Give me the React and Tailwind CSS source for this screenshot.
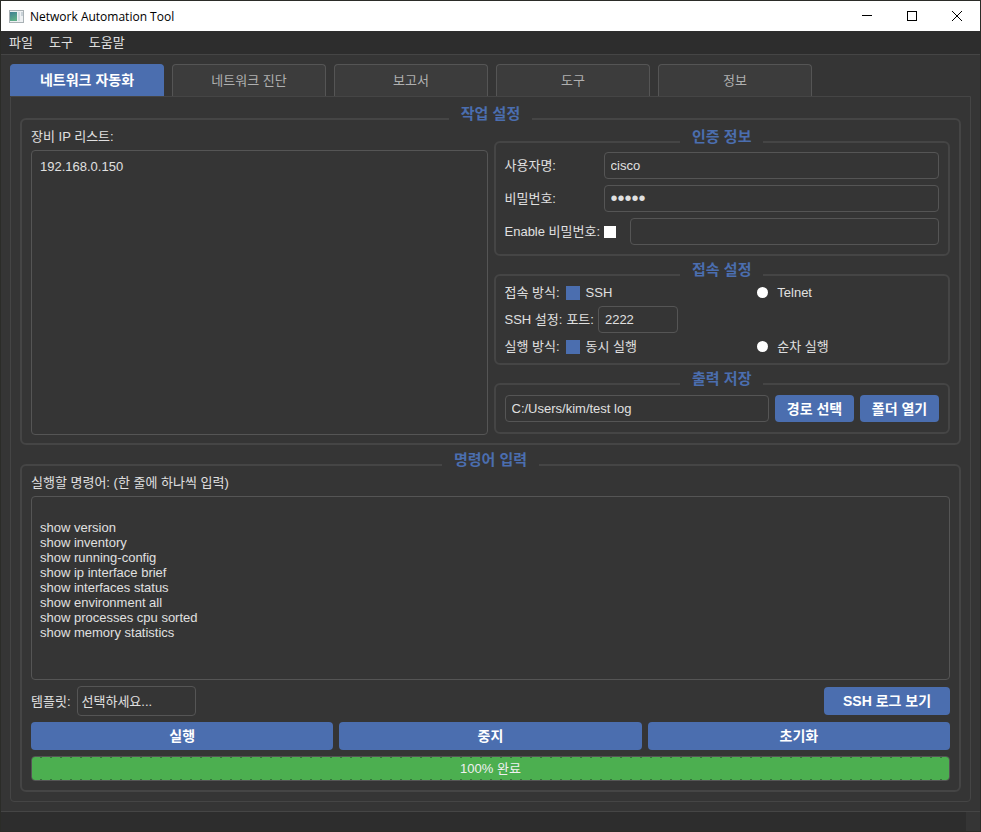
import React, { useState } from 'react';

const TABS = ['네트워크 자동화', '네트워크 진단', '보고서', '도구', '정보'];
const MENUS = ['파일', '도구', '도움말'];

const DEFAULT_COMMANDS = `
show version
show inventory
show running-config
show ip interface brief
show interfaces status
show environment all
show processes cpu sorted
show memory statistics`;

const fieldClass =
  'rounded-[4px] border border-[#555555] bg-[#353535] text-[#e0e0e0] outline-none focus:border-[#4b6eaf]';

function Group({ title, className = '', children }) {
  return (
    <fieldset className={`min-w-0 rounded-[6px] border-2 border-[#454545] px-[9px] ${className}`}>
      <legend className="mx-auto px-3 pb-[10px] text-[15px] leading-[10px] font-bold text-[#4b6eaf]">{title}</legend>
      {children}
    </fieldset>
  );
}

function Button({ className = '', children, ...props }) {
  return (
    <button
      type="button"
      className={`rounded-[4px] bg-[#4b6eaf] text-[14px] leading-5 font-bold text-white hover:bg-[#5a7dbe] ${className}`}
      {...props}
    >
      {children}
    </button>
  );
}

function Radio({ label, ...props }) {
  return (
    <label className="flex items-center gap-[6px]">
      <input
        type="radio"
        className="mr-[3px] size-[11px] appearance-none rounded-full bg-white checked:mr-0 checked:size-[14px] checked:rounded-none checked:bg-[#4b6eaf]"
        {...props}
      />
      {label}
    </label>
  );
}

function TitleBar() {
  return (
    <header className="flex h-[30px] items-center bg-white text-black">
      <svg className="ml-2 h-[13px] w-[15px]" viewBox="0 0 15 13">
        <defs>
          <linearGradient id="appIcon" x1="0" y1="0" x2="0.4" y2="1">
            <stop offset="0" stopColor="#3f7f94" />
            <stop offset="1" stopColor="#5fae88" />
          </linearGradient>
        </defs>
        <rect x="0.5" y="0.5" width="14" height="12" fill="#eef1f3" stroke="#a9b1b5" />
        <rect x="1" y="2" width="7" height="9" fill="url(#appIcon)" />
        <rect x="9" y="2" width="2" height="9" fill="#d5dce2" />
        <rect x="12" y="2" width="2" height="4" fill="#c9d2d8" />
      </svg>
      <h1 className="ml-[6px] flex-1 font-['Open_Sans',sans-serif] text-[12px]">Network Automation Tool</h1>
      <button type="button" aria-label="Minimize" className="flex h-full w-[45px] items-center justify-center">
        <svg width="10" height="10" viewBox="0 0 10 10" shapeRendering="crispEdges">
          <path d="M0 4.5h10" stroke="#000" fill="none" />
        </svg>
      </button>
      <button type="button" aria-label="Maximize" className="flex h-full w-[45px] items-center justify-center">
        <svg width="10" height="10" viewBox="0 0 10 10" shapeRendering="crispEdges">
          <path d="M0.5 0.5h9v9h-9z" stroke="#000" fill="none" />
        </svg>
      </button>
      <button type="button" aria-label="Close" className="flex h-full w-[46px] items-center justify-center">
        <svg width="10" height="10" viewBox="0 0 10 10">
          <path d="M0 0l10 10M10 0L0 10" stroke="#000" fill="none" />
        </svg>
      </button>
    </header>
  );
}

function ProgressBar({ value }) {
  return (
    <div
      role="progressbar"
      aria-valuenow={value}
      className="relative h-[25px] overflow-hidden rounded-[4px] border border-[#555555]"
    >
      <div className="flex h-full flex-col bg-[#4caf50]" style={{ width: `${value}%` }}>
        <div className="h-px bg-[repeating-linear-gradient(90deg,transparent_0_8px,#34753a_8px_10px)]" />
        <div className="flex-1" />
        <div className="h-px bg-[repeating-linear-gradient(90deg,transparent_0_8px,#34753a_8px_10px)]" />
      </div>
      <span className="absolute inset-0 flex items-center justify-center text-[#f0f0f0]">{value}% 완료</span>
    </div>
  );
}

export default function App() {
  const [tab, setTab] = useState(TABS[0]);
  const [ips, setIps] = useState('192.168.0.150');
  const [commands, setCommands] = useState(DEFAULT_COMMANDS);
  const [protocol, setProtocol] = useState('ssh');
  const [runMode, setRunMode] = useState('parallel');
  const [progress, setProgress] = useState(100);

  return (
    <div className="flex min-h-screen flex-col border border-[#2b2c28] bg-[#353535] font-['Liberation_Sans','Noto_Sans_CJK_KR',sans-serif] text-[13px] leading-[15px] text-[#e0e0e0]">
      <TitleBar />

      <nav className="flex h-6 items-center gap-4 border-b border-[#454545] bg-[#2d2d2d] px-2">
        {MENUS.map((menu) => (
          <button key={menu} type="button">{menu}</button>
        ))}
      </nav>

      <main className="flex flex-1 flex-col p-[9px]">
        {/* Tabs */}
        <div role="tablist" className="flex gap-2">
          {TABS.map((name) => (
            <button
              key={name}
              type="button"
              role="tab"
              aria-selected={tab === name}
              onClick={() => setTab(name)}
              className={`h-8 w-[154px] rounded-t-[4px] border border-b-0 ${
                tab === name
                  ? 'border-[#4b6eaf] bg-[#4b6eaf] text-[14px] font-bold text-white'
                  : 'border-[#555555] bg-[#3c3c3c] text-[#b0b0b0]'
              }`}
            >
              {name}
            </button>
          ))}
        </div>

        <div className="flex flex-1 flex-col gap-[10px] rounded-b-[4px] border border-[#454545] px-[9px] pt-3 pb-[9px]">
          {/* Job settings */}
          <Group title="작업 설정" className="pb-2">
            <div className="grid grid-cols-2 gap-[6px]">
              <div className="flex flex-col gap-[6px]">
                <label htmlFor="ips">장비 IP 리스트:</label>
                <textarea
                  id="ips"
                  value={ips}
                  onChange={(e) => setIps(e.target.value)}
                  className={`flex-1 resize-none p-2 ${fieldClass}`}
                />
              </div>

              <div className="flex flex-col gap-[9px] pt-[3px] pb-px">
                <Group title="인증 정보" className="pb-[9px]">
                  <div className="flex flex-col gap-[6px]">
                    <div className="flex items-center gap-[3px]">
                      <label htmlFor="user" className="w-24">사용자명:</label>
                      <input id="user" type="text" defaultValue="cisco" className={`h-[27px] min-w-0 flex-1 px-[6px] ${fieldClass}`} />
                    </div>
                    <div className="flex items-center gap-[3px]">
                      <label htmlFor="password" className="w-24">비밀번호:</label>
                      <input id="password" type="password" defaultValue="cisco" className={`h-[27px] min-w-0 flex-1 px-[6px] text-[20px] ${fieldClass}`} />
                    </div>
                    <div className="flex items-center gap-[3px]">
                      <label htmlFor="useEnable" className="w-24 whitespace-nowrap">Enable 비밀번호:</label>
                      <input id="useEnable" type="checkbox" className="mr-[11px] size-3 appearance-none bg-white checked:bg-[#4b6eaf]" />
                      <input type="password" aria-label="Enable 비밀번호" className={`h-[27px] min-w-0 flex-1 px-[6px] text-[20px] ${fieldClass}`} />
                    </div>
                  </div>
                </Group>

                <Group title="접속 설정" className="pb-[9px]">
                  <div className="flex flex-col gap-[6px]">
                    <div className="flex items-center gap-[6px]">
                      <span>접속 방식:</span>
                      <div className="grid flex-1 grid-cols-2 gap-[10px]">
                        <Radio label="SSH" name="protocol" checked={protocol === 'ssh'} onChange={() => setProtocol('ssh')} />
                        <Radio label="Telnet" name="protocol" checked={protocol === 'telnet'} onChange={() => setProtocol('telnet')} />
                      </div>
                    </div>
                    <div className="flex items-center gap-1">
                      <span>SSH 설정:</span>
                      <label htmlFor="port">포트:</label>
                      <input id="port" type="text" defaultValue="2222" className={`h-[27px] w-20 px-[6px] ${fieldClass}`} />
                    </div>
                    <div className="flex items-center gap-[6px]">
                      <span>실행 방식:</span>
                      <div className="grid flex-1 grid-cols-2 gap-[10px]">
                        <Radio label="동시 실행" name="runMode" checked={runMode === 'parallel'} onChange={() => setRunMode('parallel')} />
                        <Radio label="순차 실행" name="runMode" checked={runMode === 'serial'} onChange={() => setRunMode('serial')} />
                      </div>
                    </div>
                  </div>
                </Group>

                <Group title="출력 저장" className="pb-[9px]">
                  <div className="flex gap-[6px] py-px">
                    <input type="text" aria-label="출력 경로" defaultValue="C:/Users/kim/test log" className={`h-[27px] min-w-0 flex-1 px-[6px] ${fieldClass}`} />
                    <Button className="w-[79px]">경로 선택</Button>
                    <Button className="w-[79px]">폴더 열기</Button>
                  </div>
                </Group>
              </div>
            </div>
          </Group>

          {/* Commands */}
          <Group title="명령어 입력" className="flex-1 pb-[9px]">
            <div className="flex flex-col gap-[6px]">
              <label htmlFor="commands">실행할 명령어: (한 줄에 하나씩 입력)</label>
              <textarea
                id="commands"
                value={commands}
                onChange={(e) => setCommands(e.target.value)}
                className={`min-h-[184px] resize-none p-2 ${fieldClass}`}
              />
              <div className="flex items-center gap-[6px]">
                <label htmlFor="template">템플릿:</label>
                <select id="template" className={`h-[30px] w-[119px] appearance-none px-1 ${fieldClass}`}>
                  <option>선택하세요...</option>
                </select>
                <Button className="ml-auto h-7 w-[126px]">SSH 로그 보기</Button>
              </div>
              <div className="grid grid-cols-3 gap-[6px]">
                <Button className="h-7" onClick={() => setProgress(100)}>실행</Button>
                <Button className="h-7">중지</Button>
                <Button className="h-7" onClick={() => setProgress(0)}>초기화</Button>
              </div>
              <ProgressBar value={progress} />
            </div>
          </Group>
        </div>
      </main>

      <footer className="flex h-5 justify-end border-t border-[#454545] bg-[#2d2d2d]">
        <div className="w-[14px] bg-[#353535]" />
      </footer>
    </div>
  );
}
